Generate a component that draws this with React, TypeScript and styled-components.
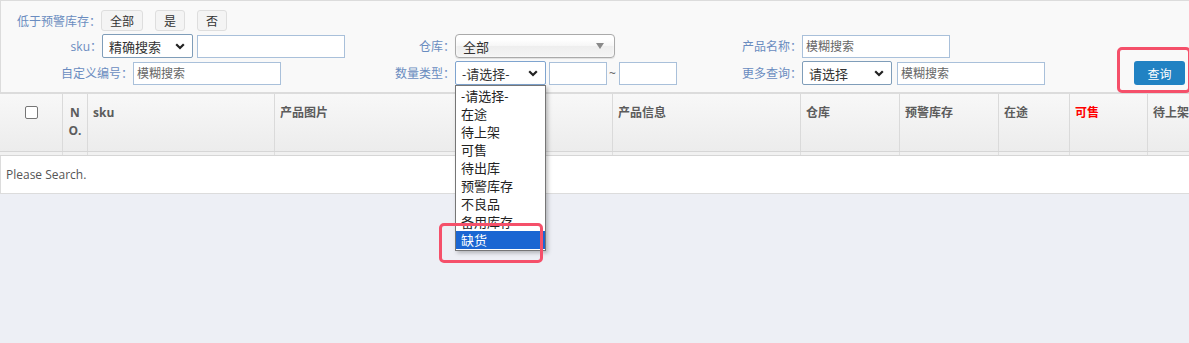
import React from "react";
import styled, { createGlobalStyle, css } from "styled-components";

const Global = createGlobalStyle`
  html, body { margin: 0; padding: 0; }
  body {
    background: #edeff5;
    font-family: "Open Sans", "Noto Sans CJK SC", sans-serif;
    overflow: hidden;
    width: 1189px;
    height: 343px;
  }
  * { box-sizing: border-box; }
`;

const Panel = styled.div`
  background: #f9f9f9;
  border-top: 1px solid #dcdcdc;
  border-left: 1px solid #dcdcdc;
  border-bottom: 2px solid #dcdcdc;
  padding: 9px 0 7px 0;
  display: flex;
  flex-direction: column;
  gap: 3px;
`;

const Row = styled.div<{ $h: number }>`
  display: grid;
  grid-template-columns: 370px 350px 1fr auto;
  align-items: center;
  height: ${(p) => p.$h}px;
`;

const Field = styled.div`
  display: flex;
  align-items: center;
  height: 100%;
`;

const Label = styled.span<{ $w: number }>`
  display: inline-block;
  width: ${(p) => p.$w}px;
  text-align: right;
  font-size: 12px;
  color: #6a8cc0;
  white-space: nowrap;
  font-family: "Open Sans", "Noto Sans CJK SC", sans-serif;
`;

const ToggleBtn = styled.span<{ $w: number; $ml: number }>`
  display: inline-flex;
  align-items: center;
  justify-content: center;
  width: ${(p) => p.$w}px;
  height: 21px;
  margin-left: ${(p) => p.$ml}px;
  background: #f4f4f4;
  border: 1px solid #dedede;
  border-radius: 3px;
  font-size: 12px;
  color: #333;
`;

const FakeSelect = styled.div<{ $w: number; $ml?: number; $open?: boolean }>`
  position: relative;
  display: flex;
  align-items: center;
  justify-content: space-between;
  width: ${(p) => p.$w}px;
  height: 24px;
  margin-left: ${(p) => p.$ml ?? 0}px;
  padding: 0 7px 0 6px;
  background: #fff;
  border: 1px solid ${(p) => (p.$open ? "#7fa4cf" : "#7f9db9")};
  border-radius: 2px;
  font-size: 13px;
  color: #333;
`;

const Chosen = styled.div<{ $w: number }>`
  display: flex;
  align-items: center;
  justify-content: space-between;
  width: ${(p) => p.$w}px;
  height: 24px;
  padding: 0 10px 0 7px;
  border: 1px solid #aaa;
  border-radius: 4px;
  background: linear-gradient(#fff 20%, #f6f6f6 50%, #eee 52%, #f4f4f4 100%);
  box-shadow: inset 0 0 3px #fff, 0 1px 1px rgba(0, 0, 0, 0.1);
  font-size: 13px;
  color: #333;
`;

const Triangle = styled.span`
  width: 0;
  height: 0;
  border-left: 4px solid transparent;
  border-right: 4px solid transparent;
  border-top: 6px solid #8a8a8a;
`;

const TextInput = styled.input<{ $w: number; $ml?: number }>`
  width: ${(p) => p.$w}px;
  height: 23px;
  margin-left: ${(p) => p.$ml ?? 0}px;
  border: 1px solid #a9c0da;
  background: #fff;
  padding: 0 3px;
  font-size: 12px;
  font-family: "Open Sans", "Noto Sans CJK SC", sans-serif;
  color: #333;
  outline: none;
  &::placeholder { color: #666; }
`;

const Tilde = styled.span`
  font-size: 12px;
  color: #666;
  margin: 0 3px 0 2px;
`;

const QueryWrap = styled.div`
  position: relative;
  margin-right: 4px;
`;

const QueryBtn = styled.button`
  width: 51px;
  height: 24px;
  border: none;
  border-radius: 3px;
  background: #2182c3;
  color: #fff;
  font-size: 12px;
  font-family: "Noto Sans CJK SC", sans-serif;
  padding: 0;
`;

const Highlight = styled.div<{ $l: number; $t: number; $w: number; $h: number }>`
  position: absolute;
  left: ${(p) => p.$l}px;
  top: ${(p) => p.$t}px;
  width: ${(p) => p.$w}px;
  height: ${(p) => p.$h}px;
  border: 3px solid #f5506a;
  border-radius: 5px;
  pointer-events: none;
  z-index: 20;
`;

const DropList = styled.ul`
  position: absolute;
  left: -1px;
  top: 23px;
  width: 91px;
  margin: 0;
  padding: 1px 0;
  list-style: none;
  background: #fff;
  border: 1px solid #767676;
  box-shadow: 2px 2px 4px rgba(0, 0, 0, 0.25);
  z-index: 10;
`;

const DropItem = styled.li<{ $active?: boolean }>`
  height: 18px;
  line-height: 18px;
  padding-left: 5px;
  font-size: 13px;
  color: #222;
  ${(p) =>
    p.$active &&
    css`
      background: #1b66d2;
      color: #fff;
    `}
`;

const Table = styled.div`
  background: #fff;
`;

const cols = "62px 25px 187px 226px 112px 188px 99px 99px 71px 78px 1fr";

const HeadRow = styled.div`
  display: grid;
  grid-template-columns: ${cols};
  height: 58px;
  background: linear-gradient(#f8f8f8, #ececec);
  border-bottom: 1px solid #d6d6d6;
`;

const Th = styled.div<{ $center?: boolean; $red?: boolean }>`
  padding: 10px 4px 0 ${(p) => (p.$center ? 4 : 5)}px;
  border-left: 1px solid #dadada;
  font-size: 12px;
  line-height: 18px;
  font-weight: 700;
  white-space: nowrap;
  overflow: hidden;
  color: ${(p) => (p.$red ? "#ff0000" : "#5c5c5c")};
  text-align: ${(p) => (p.$center ? "center" : "left")};
  &:first-child { border-left: none; }
`;

const CheckCell = styled.div`
  display: flex;
  justify-content: center;
  padding-top: 12px;
`;

const Check = styled.span`
  width: 13px;
  height: 13px;
  border: 1px solid #767676;
  border-radius: 2px;
  background: #fff;
`;

const Strip = styled.div`
  display: grid;
  grid-template-columns: ${cols};
  height: 4px;
  background: #f1f1f1;
  border-bottom: 1px solid #d6d6d6;
`;

const StripCell = styled.div`
  border-left: 1px solid #dedede;
  &:first-child { border-left: none; }
`;

const EmptyRow = styled.div`
  height: 38px;
  display: flex;
  align-items: center;
  padding-left: 5px;
  font-size: 12px;
  color: #555;
  border-left: 1px solid #dcdcdc;
  border-bottom: 1px solid #dcdcdc;
`;

const Chevron = () => (
  <svg width="10" height="7" viewBox="0 0 10 7">
    <path d="M1.2 1.2 L5 5 L8.8 1.2" fill="none" stroke="#222" strokeWidth="2.2" />
  </svg>
);

const options = ["-请选择-", "在途", "待上架", "可售", "待出库", "预警库存", "不良品", "备用库存", "缺货"];

export default function App() {
  return (
    <>
      <Global />
      <Panel>
        <Row $h={21}>
          <Field>
            <Label $w={100}>低于预警库存：</Label>
            <ToggleBtn $w={42} $ml={0}>全部</ToggleBtn>
            <ToggleBtn $w={30} $ml={12}>是</ToggleBtn>
            <ToggleBtn $w={30} $ml={12}>否</ToggleBtn>
          </Field>
        </Row>
        <Row $h={24}>
          <Field>
            <Label $w={101}>sku：</Label>
            <FakeSelect $w={91}>
              <span>精确搜索</span>
              <Chevron />
            </FakeSelect>
            <TextInput $w={148} $ml={4} />
          </Field>
          <Field>
            <Label $w={84}>仓库：</Label>
            <Chosen $w={160}>
              <span>全部</span>
              <Triangle />
            </Chosen>
          </Field>
          <Field>
            <Label $w={81}>产品名称：</Label>
            <TextInput $w={148} placeholder="模糊搜索" />
          </Field>
        </Row>
        <Row $h={24}>
          <Field>
            <Label $w={132}>自定义编号：</Label>
            <TextInput $w={148} placeholder="模糊搜索" />
          </Field>
          <Field>
            <Label $w={84}>数量类型：</Label>
            <FakeSelect $w={91} $open>
              <span>-请选择-</span>
              <Chevron />
              <DropList>
                {options.map((o) => (
                  <DropItem key={o} $active={o === "缺货"}>
                    {o}
                  </DropItem>
                ))}
              </DropList>
              <Highlight $l={-17} $t={161} $w={104} $h={40} />
            </FakeSelect>
            <TextInput $w={58} $ml={3} />
            <Tilde>~</Tilde>
            <TextInput $w={58} />
          </Field>
          <Field>
            <Label $w={81}>更多查询：</Label>
            <FakeSelect $w={90}>
              <span>请选择</span>
              <Chevron />
            </FakeSelect>
            <TextInput $w={148} $ml={5} placeholder="模糊搜索" />
          </Field>
          <QueryWrap>
            <QueryBtn>查询</QueryBtn>
            <Highlight $l={-17} $t={-14} $w={74} $h={46} />
          </QueryWrap>
        </Row>
      </Panel>
      <Table>
        <HeadRow>
          <CheckCell>
            <Check />
          </CheckCell>
          <Th $center>
            N<br />O.
          </Th>
          <Th>sku</Th>
          <Th>产品图片</Th>
          <Th />
          <Th>产品信息</Th>
          <Th>仓库</Th>
          <Th>预警库存</Th>
          <Th>在途</Th>
          <Th $red>可售</Th>
          <Th>待上架</Th>
        </HeadRow>
        <Strip>
          {Array.from({ length: 11 }).map((_, i) => (
            <StripCell key={i} />
          ))}
        </Strip>
        <EmptyRow>Please Search.</EmptyRow>
      </Table>
    </>
  );
}
